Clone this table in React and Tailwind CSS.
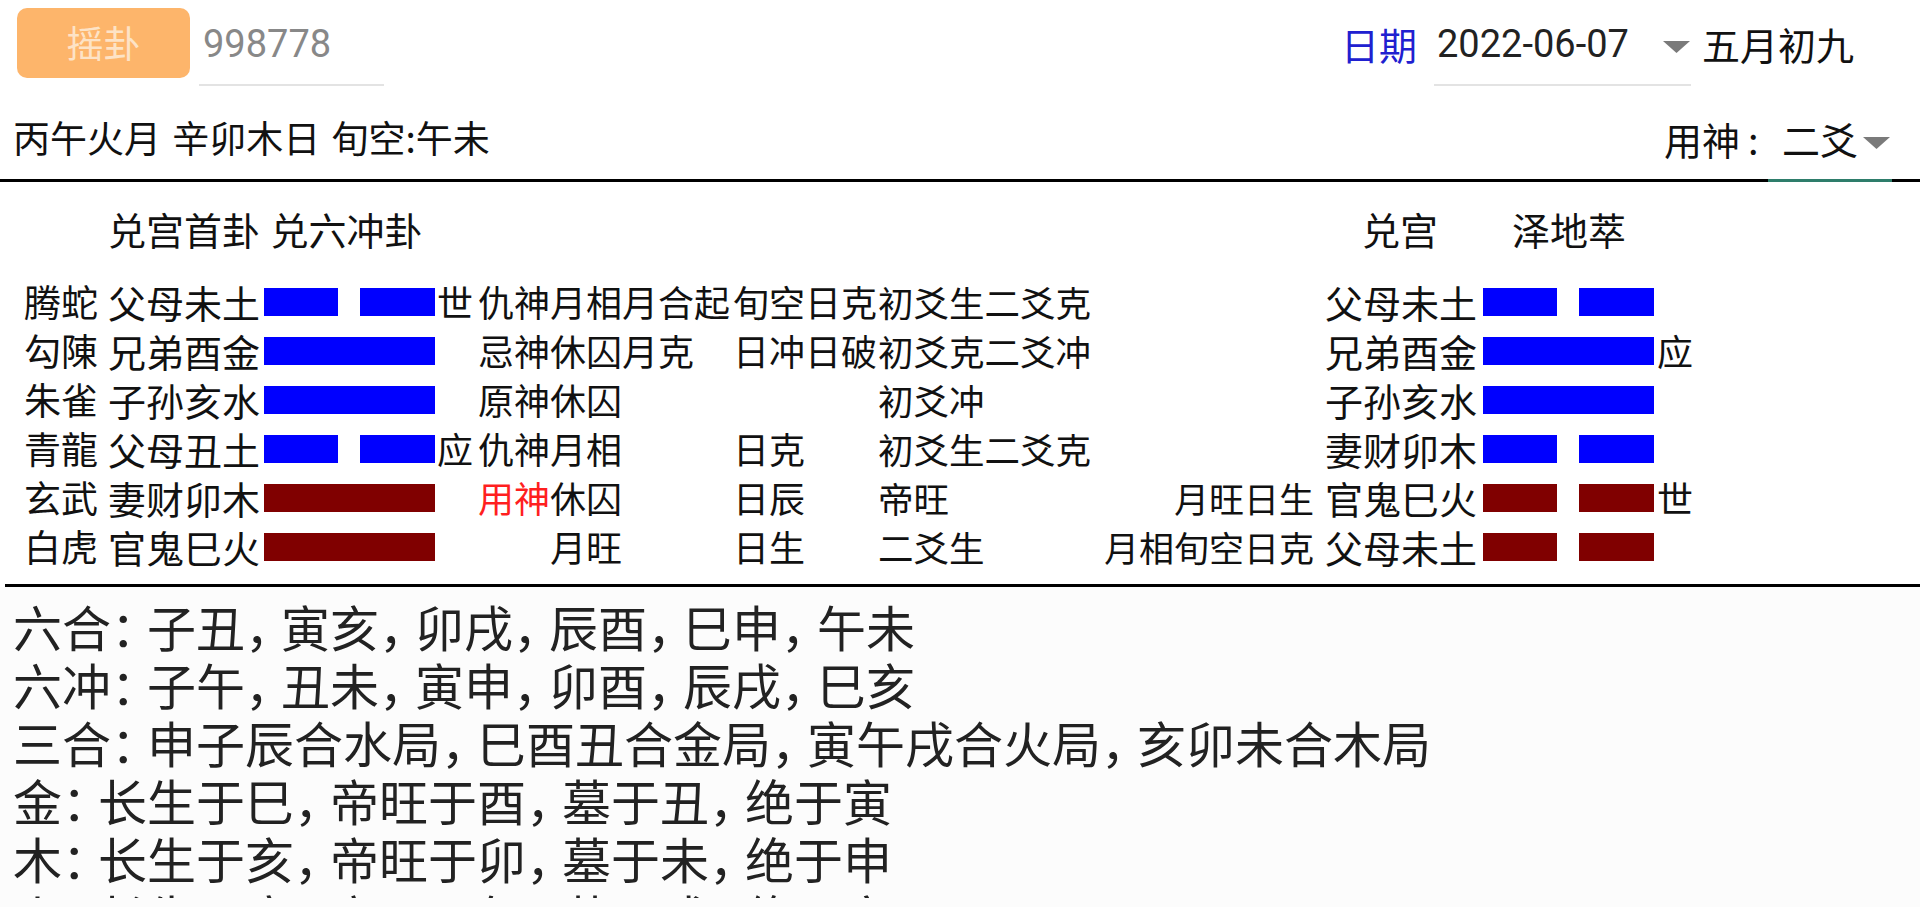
import React from "react";

const BLUE = "bg-[#0000ff]";
const RED = "bg-[#800000]";

const rows = [
  {
    shen: "腾蛇",
    qin: "父母未土",
    yin: true,
    color: BLUE,
    mark: "世",
    label: "仇神",
    state: "月相月合起",
    ri: "旬空日克",
    dong: "初爻生二爻克",
    rState: "",
    rQin: "父母未土",
    rYin: true,
    rColor: BLUE,
    rMark: "",
  },
  {
    shen: "勾陳",
    qin: "兄弟酉金",
    yin: false,
    color: BLUE,
    mark: "",
    label: "忌神",
    state: "休囚月克",
    ri: "日冲日破",
    dong: "初爻克二爻冲",
    rState: "",
    rQin: "兄弟酉金",
    rYin: false,
    rColor: BLUE,
    rMark: "应",
  },
  {
    shen: "朱雀",
    qin: "子孙亥水",
    yin: false,
    color: BLUE,
    mark: "",
    label: "原神",
    state: "休囚",
    ri: "",
    dong: "初爻冲",
    rState: "",
    rQin: "子孙亥水",
    rYin: false,
    rColor: BLUE,
    rMark: "",
  },
  {
    shen: "青龍",
    qin: "父母丑土",
    yin: true,
    color: BLUE,
    mark: "应",
    label: "仇神",
    state: "月相",
    ri: "日克",
    dong: "初爻生二爻克",
    rState: "",
    rQin: "妻财卯木",
    rYin: true,
    rColor: BLUE,
    rMark: "",
  },
  {
    shen: "玄武",
    qin: "妻财卯木",
    yin: false,
    color: RED,
    mark: "",
    label: "用神",
    red: true,
    state: "休囚",
    ri: "日辰",
    dong: "帝旺",
    rState: "月旺日生",
    rQin: "官鬼巳火",
    rYin: true,
    rColor: RED,
    rMark: "世",
  },
  {
    shen: "白虎",
    qin: "官鬼巳火",
    yin: false,
    color: RED,
    mark: "",
    label: "",
    state: "月旺",
    ri: "日生",
    dong: "二爻生",
    rState: "月相旬空日克",
    rQin: "父母未土",
    rYin: true,
    rColor: RED,
    rMark: "",
  },
];

const notes = [
  "六合：子丑，寅亥，卯戌，辰酉，巳申，午未",
  "六冲：子午，丑未，寅申，卯酉，辰戌，巳亥",
  "三合：申子辰合水局，巳酉丑合金局，寅午戌合火局，亥卯未合木局",
  "金：长生于巳，帝旺于酉，墓于丑，绝于寅",
  "木：长生于亥，帝旺于卯，墓于未，绝于申",
  "火：长生于寅，帝旺于午，墓于戌，绝于亥",
];

function Yao({ yin, color }) {
  if (!yin) {
    return <div className={`h-[28px] w-[171px] shrink-0 ${color}`} />;
  }
  return (
    <div className="flex h-[28px] w-[171px] shrink-0 justify-between">
      <div className={`h-full w-[74px] ${color}`} />
      <div className={`h-full w-[75px] ${color}`} />
    </div>
  );
}

function Caret({ className }) {
  return (
    <svg className={className} width="27" height="12" viewBox="0 0 27 12">
      <polygon points="0,0 27,0 13.5,12" fill="#7a7a7a" />
    </svg>
  );
}

function NoteLine({ text }) {
  // punctuation in the reference is narrower than a full CJK cell
  const parts = text.split(/([，：])/);
  return (
    <div className="whitespace-nowrap">
      {parts.map((part, i) =>
        part === "，" || part === "：" ? (
          <span key={i} className="inline-block w-[36px]">
            {part}
          </span>
        ) : (
          <span key={i}>{part}</span>
        )
      )}
    </div>
  );
}

export default function App() {
  return (
    <div className="h-[907px] w-full overflow-hidden bg-white font-['Noto_Sans_CJK_SC',sans-serif] text-[36px] text-[#111]">
      {/* top bar */}
      <div className="flex h-[86px] items-start pl-[17px] pr-[66px] pt-[8px]">
        <button
          type="button"
          className="flex h-[70px] w-[173px] items-center justify-center rounded-[10px] bg-[#fdb56b] text-[37px] text-[#fde3c6]"
        >
          摇卦
        </button>
        <div className="ml-[9px] flex h-[78px] w-[185px] items-center border-b-2 border-[#e3e3e3] pb-[4px] pl-[4px] font-['Roboto','Noto_Sans_CJK_SC',sans-serif] text-[38px] text-[#888]">
          998778
        </div>
        <div className="ml-auto flex h-[70px] items-center text-[38px] text-[#2020d0]">日期</div>
        <div className="ml-[17px] flex h-[78px] w-[257px] items-center border-b-2 border-[#e3e3e3] pb-[4px] pl-[3px]">
          <span className="font-['Roboto','Noto_Sans_CJK_SC',sans-serif] text-[38px] text-[#222]">
            2022-06-07
          </span>
          <Caret className="ml-auto mr-[1px] mt-[6px]" />
        </div>
        <div className="ml-[11px] flex h-[70px] items-center text-[38px]">五月初九</div>
      </div>

      {/* date info row */}
      <div className="flex h-[93px] items-center pl-[13px] pr-[28px] pt-[11px]">
        <div className="text-[37px] [word-spacing:3px]">丙午火月 辛卯木日 旬空:午未</div>
        <div className="ml-auto flex items-center text-[38px]">
          <span>用神</span>
          <span className="w-[28px] pl-[8px]">:</span>
          <div className="flex w-[124px] items-center pl-[14px]">
            <span>二爻</span>
            <Caret className="ml-[5px] mt-[10px]" />
          </div>
        </div>
      </div>
      <div className="flex h-[3px]">
        <div className="flex-1 bg-black" />
        <div className="w-[124px] bg-[#2e7d6b]" />
        <div className="w-[28px] bg-black" />
      </div>

      {/* hexagram section */}
      <div className="pt-[22px] pb-[13px]">
        <div className="flex h-[49px] items-center pl-[108px] text-[38px] leading-[49px]">
          <div className="w-[1254px] [word-spacing:2px]">兑宫首卦 兑六冲卦</div>
          <div className="w-[150px]">兑宫</div>
          <div>泽地萃</div>
        </div>
        <div className="mt-[24px]">
          {rows.map((row, i) => (
            <div key={i} className="flex h-[49px] items-center whitespace-nowrap pl-[24px] leading-[49px]">
              <div className="w-[84px] shrink-0 text-[37px]">{row.shen}</div>
              <div className="w-[156px] shrink-0 text-[38px]">{row.qin}</div>
              <Yao yin={row.yin} color={row.color} />
              <div className="w-[43px] shrink-0 pl-[2px]">{row.mark}</div>
              <div className="flex w-[255px] shrink-0">
                <span className={row.red ? "w-[72px] text-[#ff1f1f]" : "w-[72px]"}>{row.label}</span>
                <span>{row.state}</span>
              </div>
              <div className="w-[145px] shrink-0">{row.ri}</div>
              <div className="w-[220px] shrink-0 text-[35.5px]">{row.dong}</div>
              <div className="w-[216px] shrink-0 text-right text-[35px]">{row.rState}</div>
              <div className="ml-[11px] w-[158px] shrink-0 text-[38px]">{row.rQin}</div>
              <Yao yin={row.rYin} color={row.rColor} />
              <div className="pl-[3px]">{row.rMark}</div>
            </div>
          ))}
        </div>
      </div>
      <div className="ml-[5px] h-[3px] bg-black" />

      {/* notes, cut off by the scroll area just above the screen edge */}
      <div className="h-[311px] overflow-hidden bg-[#fcfcfc] pl-[13px] pt-[10px] text-[49px] leading-[58px] text-[#222]">
        {notes.map((line) => (
          <NoteLine key={line} text={line} />
        ))}
      </div>
      <div className="h-[9px] bg-[#fcfcfc]" />
    </div>
  );
}
